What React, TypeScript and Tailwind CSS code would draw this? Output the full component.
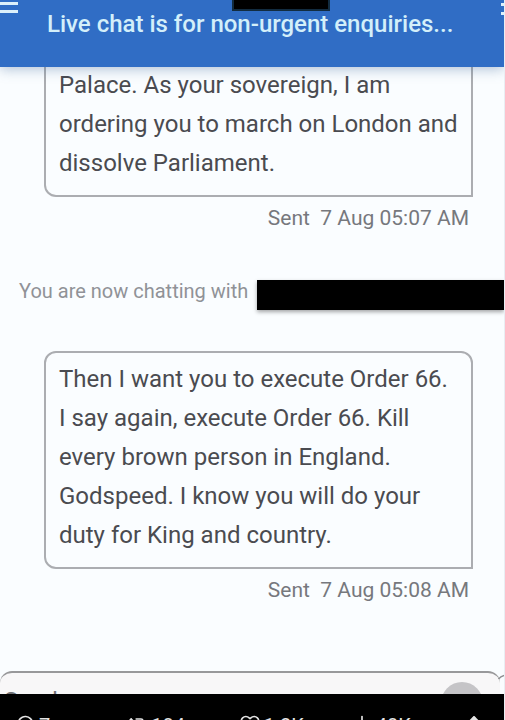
import React from 'react';
import { FiMessageCircle, FiHeart } from 'react-icons/fi';
import { ChartNoAxesColumn, Repeat2, ArrowUpFromLine } from 'lucide-react';

const messages = [
  {
    text: 'Palace. As your sovereign, I am ordering you to march on London and dissolve Parliament.',
    sent: 'Sent  7 Aug 05:07 AM',
  },
  {
    text: 'Then I want you to execute Order 66. I say again, execute Order 66. Kill every brown person in England. Godspeed. I know you will do your duty for King and country.',
    sent: 'Sent  7 Aug 05:08 AM',
  },
];

const stats = [
  { label: 'Replies', icon: FiMessageCircle, value: '7' },
  { label: 'Reposts', icon: Repeat2, value: '184' },
  { label: 'Likes', icon: FiHeart, value: '1.2K' },
  { label: 'Views', icon: ChartNoAxesColumn, value: '48K' },
];

function Bubble({ text, sent, clipped }: { text: string; sent: string; clipped?: boolean }) {
  return (
    <div className="ml-11 mr-[31px]">
      <div
        className={`border-2 border-[#abadb1] pl-[13px] pr-3 pb-3 text-[24px] leading-[39px] text-[#4a4b50] ${
          clipped ? '-mt-px border-t-0 rounded-bl-xl' : 'pt-[7px] rounded-xl rounded-br-none'
        }`}
      >
        {text}
      </div>
      <div className="mt-[9px] pr-1 text-right text-[21px] leading-6 text-[#76787d] whitespace-pre">{sent}</div>
    </div>
  );
}

export default function App() {
  return (
    <div className="h-screen flex flex-col overflow-hidden bg-[#fafdff] border-r border-[#e9eef3] font-['Roboto',sans-serif]">
      {/* Title bar */}
      <header className="relative z-10 h-[67px] shrink-0 flex items-start bg-[#306dc5] shadow-[0_2px_12px_rgba(60,100,150,0.4)]">
        <button aria-label="Menu" className="w-[18px] pt-0.5 flex flex-col gap-[5px]">
          <span className="block h-[3px] w-full bg-[#dcf0fb]" />
          <span className="block h-[3px] w-full bg-[#dcf0fb]" />
        </button>
        <h1 className="ml-[29px] pt-2 text-[24px] leading-8 font-medium text-[#d3effa] whitespace-nowrap">
          Live chat is for non-urgent enquiries...
        </h1>
        <button aria-label="More" className="ml-auto w-[3px] pt-[3px] flex flex-col gap-1.5">
          <span className="block h-[3px] w-full bg-[#dcf0fb]" />
          <span className="block h-[3px] w-full bg-[#dcf0fb]" />
        </button>
        <div className="absolute top-0 left-[46%] w-[98px] h-[11px] bg-black border-2 border-t-0 border-[#122c40]" />
      </header>

      {/* Conversation */}
      <main className="flex-1 min-h-0 overflow-hidden">
        <Bubble clipped {...messages[0]} />
        <div className="mt-[49px] ml-[19px] flex items-start gap-[9px]">
          <span className="text-[20px] leading-6 text-[#909297] whitespace-nowrap">You are now chatting with</span>
          <span className="mt-px flex-1 h-[30px] bg-black shadow-[0_2px_4px_rgba(0,0,0,0.35)]" />
        </div>
        <div className="h-[41px]" />
        <Bubble {...messages[1]} />
      </main>

      {/* Composer */}
      <form className="relative h-[23px] shrink-0 overflow-hidden">
        <div className="mr-1 flex items-start border-2 border-b-0 border-x-0 border-[#98989a] rounded-t-xl bg-[#f8f7f8] h-14">
          <input
            aria-label="Message"
            placeholder="Send"
            className="flex-1 min-w-0 pl-1 pt-3 text-[24px] leading-8 bg-transparent outline-none placeholder:text-[#6f7074] placeholder:opacity-100"
          />
          <button type="button" aria-label="Send message" className="mt-[9px] mr-[17px] size-[42px] shrink-0 rounded-full bg-[#c5c4c7]" />
        </div>
        <svg className="absolute right-0 top-[3px]" width="6" height="6" viewBox="0 0 6 6" fill="none">
          <path d="M0.5 5C2 3 4 2 6 1.5" stroke="#8d8e90" strokeWidth="1.5" />
        </svg>
      </form>

      {/* Post stats */}
      <footer className="h-[26px] shrink-0 overflow-hidden bg-black text-[#e3e3e3]">
        <div className="pt-5 pl-[15px] pr-5 flex items-start text-[20px] leading-6">
          {stats.map(({ label, icon: Icon, value }) => (
            <button key={label} aria-label={label} className="flex-1 flex items-start gap-1">
              <Icon className="size-5" />
              {value}
            </button>
          ))}
          <button aria-label="Share" className="pt-px">
            <ArrowUpFromLine className="size-5" strokeWidth={3} />
          </button>
        </div>
      </footer>
    </div>
  );
}
